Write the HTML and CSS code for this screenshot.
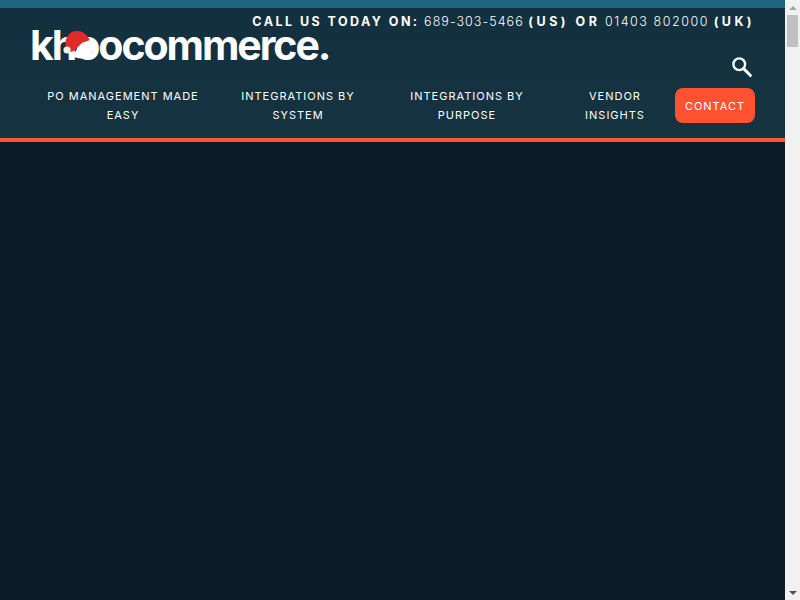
FILE: index.html
```html
<!DOCTYPE html>
<html lang="en">
<head>
<meta charset="utf-8">
<title>khoocommerce</title>
<link rel="stylesheet" href="styles.css">
</head>
<body>
<div class="page">
  <div class="topbar"></div>
  <header class="header">
    <div class="brand-row">
      <a class="logo" href="#">
        <span class="logo-text">khoocommerce.</span>
        <svg class="hat" width="38" height="32" viewBox="0 0 38 32" aria-hidden="true">
          <path d="M3.500 17C2.500 8 8 2 15 2c6 0 11 4 13 10l-8 2-8 8-4 1z" fill="#e02b2b"/>
          <path d="M10 27l10-13 8-3c3 2 4 6 3 10-1 4-4 7-8 8-5 1-9 0-13-2z" fill="#fff"/>
          <circle cx="5" cy="21" r="3.6" fill="#f1f1f1"/>
        </svg>
      </a>
      <div class="side">
        <p class="phone"><b>CALL US TODAY ON:</b> 689-303-5466 <b class="wide">(US) OR</b> <span class="uk-num">01403 802000</span> <b class="wider">(UK)</b></p>
        <svg class="search" width="22" height="22" viewBox="0 0 24 24" aria-label="Search">
          <circle cx="9" cy="9" r="6.4" fill="none" stroke="#fff" stroke-width="2.6"/>
          <path d="M13.800 13.800l7.400 7.400" stroke="#fff" stroke-width="3.2" stroke-linecap="round"/>
        </svg>
      </div>
    </div>
    <nav class="nav">
      <a class="item w1" href="#">PO MANAGEMENT MADE EASY</a>
      <a class="item w2" href="#">INTEGRATIONS BY SYSTEM</a>
      <a class="item w3" href="#">INTEGRATIONS BY PURPOSE</a>
      <a class="item w4" href="#">VENDOR INSIGHTS</a>
      <a class="contact" href="#">CONTACT</a>
    </nav>
  </header>
  <main class="main"></main>
</div>
<aside class="scrollbar" aria-hidden="true">
  <span class="arrow up"></span>
  <span class="track"><span class="thumb"></span></span>
  <span class="arrow down"></span>
</aside>
</body>
</html>
```
FILE: styles.css
```css
html, body { height: 100%; }
body { margin: 0; display: flex; overflow: hidden; background: #0c1b28; font-family: "Inter", "Liberation Sans", sans-serif; color: #fff; }
a { color: inherit; text-decoration: none; }
.page { flex: 1; min-width: 0; display: flex; flex-direction: column; }
.topbar { height: 8px; background: #1c6480; }
.header { height: 130px; background: linear-gradient(#12303e, #153340); border-bottom: 4px solid #ff5230; display: flex; flex-direction: column; }
.brand-row { height: 75px; display: grid; padding: 0 30px 0 32px; }
.logo, .side { grid-area: 1 / 1; }
.logo { position: relative; justify-self: start; align-self: start; margin-top: 21px; height: 32px; }
.logo-text { font-weight: 700; font-size: 41px; letter-spacing: -2.05px; line-height: 32px; display: block; margin-left: -2px; }
.hat { position: absolute; left: 30px; top: 0; }
.side { display: flex; flex-direction: column; align-items: flex-end; }
.phone { margin: 6px 0 0; font-size: 12.5px; line-height: 15px; letter-spacing: 1.05px; font-weight: 300; white-space: nowrap; }
.phone b { font-weight: 700; letter-spacing: 2.45px; }
.phone .wide { letter-spacing: 3.5px; }
.phone .wider { letter-spacing: 3.45px; }
.uk-num { letter-spacing: 1.55px; }
.search { margin-top: 27px; margin-right: 2px; }
.nav { display: flex; align-items: center; padding-left: 33px; height: 45px; }
.item { font-size: 11px; line-height: 19px; letter-spacing: 1px; text-align: center; font-weight: 400; }
.w1 { width: 180px; }
.w2 { width: 130px; margin-left: 20px; }
.w3 { width: 130px; margin-left: 39px; }
.w4 { width: 80px; margin-left: 43px; }
.contact { margin-left: 20px; width: 80px; height: 35px; background: #ff5230; border-radius: 8px; font-size: 11px; letter-spacing: 1px; display: flex; align-items: center; justify-content: center; }
.main { flex: 1; background: #0c1b28; }
.scrollbar { width: 15px; background: #f1f1f1; display: flex; flex-direction: column; }
.arrow { height: 15px; display: flex; align-items: center; justify-content: center; }
.arrow::before { content: ""; border-left: 4px solid transparent; border-right: 4px solid transparent; }
.up::before { border-bottom: 4px solid #a3a3a3; }
.down::before { border-top: 4px solid #505050; }
.track { flex: 1; padding: 0 2px; }
.thumb { display: block; height: 32px; background: #c1c1c1; }
```
